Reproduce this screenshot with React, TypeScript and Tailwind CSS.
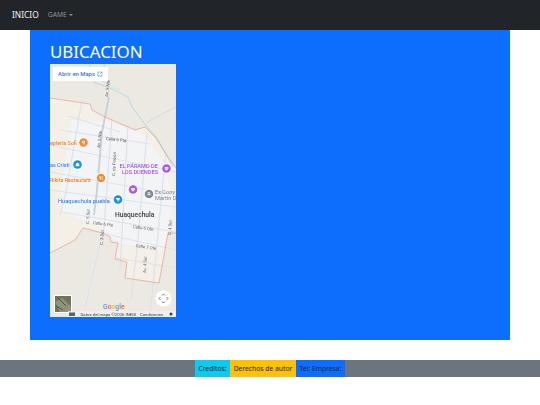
const sans = "font-['Noto_Sans','Open_Sans',sans-serif]";

function Pin({ x, y, fill, glyph }: { x: number; y: number; fill: string; glyph: string }) {
  return (
    <g>
      <path d={`M${x} ${y + 6.6}L${x - 3.7} ${y + 3}A5 5 0 1 1 ${x + 3.7} ${y + 3}Z`} fill="#fff" />
      <circle cx={x} cy={y} r="4.3" fill={fill} />
      <path d={glyph} transform={`translate(${x} ${y})`} fill="#fff" />
    </g>
  );
}

const food = "M-1.6 -1.8H-1V-.3H-.6V-1.8H0V2H-.6V.4H-1.6ZM.7 -1.8H1.5V2H.9V.4H.7Z";
const shop = "M-1.8 -.6L0 -2L1.8 -.6V1.8H-1.8Z";
const cart = "M-2 -1.5H2L1.4 .6H-1.2ZM-1 1.1H1.2V1.8H-1Z";
const theatre = "M-1.8 -1.6H1.8V.6L0 1.9L-1.8 .6ZM-1 -.7V-.1H-.2V-.7ZM.2 -.7V-.1H1V-.7Z";
const temple = "M-1.9 -.7L0 -2L1.9 -.7ZM-1.5 -.2H-.7V1.3H-1.5ZM-.4 -.2H.4V1.3H-.4ZM.7 -.2H1.5V1.3H.7Z";

function MapArt() {
  const streets = [
    "M82 100L66 192L60 215", "M112 118L106 200L103 240", "M128 125L120 270", "M147 132L138 240L131 300", "M166 150L150 317",
    "M68 116L120 132", "M60 130L150 144", "M50 145L176 172", "M50 172L176 195", "M50 190L176 207", "M62 212L176 232", "M88 230L176 250", "M116 258L176 268",
    "M102 235L83 317",
  ];
  return (
    <svg viewBox="50 64 126 253" className="block h-full w-full blur-[0.25px]" fontFamily="Roboto, 'Noto Sans', sans-serif">
      <rect x="50" y="64" width="126" height="253" fill="#ebe9e2" />
      <path d="M50 98L90 104L92 110L105 117L135 130L145 127L155 137L168 157L176 168L176 233L168 233L159 283L125 278L127 262L115 259L118 243L111 242L110 237L103 233L83 228L75 240L50 253Z" fill="#f5f0e7" />
      <path d="M72 120L110 122L145 135L165 165L172 200L168 232L162 250L118 243L100 226L62 212L60 190L66 160Z" fill="#f3f4f6" />
      {streets.map((d) => (
        <path key={d} d={d} stroke="#dde2e9" strokeWidth="1.2" fill="none" />
      ))}
      <path d="M109 97L102 132L97 190L94 215" stroke="#c8d0da" strokeWidth="1.9" fill="none" />
      <path d="M147 122L176 107" stroke="#d2d8da" strokeWidth="0.9" fill="none" />
      <path d="M90 64L91 70M104 64L105 70" stroke="#cfdbe2" strokeWidth="1.3" fill="none" />
      <path d="M93 82L110 88L128 97L132 107L147 127L157 138L173 167" stroke="#a8d4e2" strokeWidth="0.8" fill="none" />
      <path d="M100 80L120 90" stroke="#b9dde6" strokeWidth="0.6" fill="none" />
      <path d="M50 98L90 104L92 110L105 117L135 130L145 127L155 137L168 157L176 168" stroke="#e2a094" strokeWidth="0.7" fill="none" />
      <path d="M50 253L75 240L83 228L103 233L110 237L111 242L118 243L115 259L127 262L125 278L159 283L168 233L176 233" stroke="#e2a094" strokeWidth="0.7" fill="none" />

      <g fill="#5f6368" fontSize="4.3">
        <text transform="translate(108 97) rotate(-83)">Av. 5 Nte</text>
        <text transform="translate(100 148) rotate(-84)">Av. 5 Nte</text>
        <text transform="rotate(6 106 138)" x="106" y="140">Calle 6 Pte</text>
        <text transform="translate(115 176) rotate(-87)">C. de Pinzón</text>
        <text transform="rotate(8 93 222)" x="93" y="224">Calle 6 Pte</text>
        <text transform="rotate(8 133 226)" x="133" y="228">Calle 6 Ote</text>
        <text transform="rotate(8 136 244)" x="136" y="247">Calle 7 Ote</text>
        <text transform="translate(89 224) rotate(-87)">C. 5 Sur</text>
        <text transform="translate(103 245) rotate(-87)">C. 3 Sur</text>
        <text transform="translate(146 273) rotate(-87)">Av. 4 Sur</text>
        <text transform="translate(171 235) rotate(-87)">C. 4 Sur</text>
      </g>

      <g fontSize="5.4">
        <text x="50" y="145" fill="#e8710a">eplería Sofi</text>
        <text x="50" y="167" fill="#1a73e8">as Cristi</text>
        <text x="50" y="181.5" fill="#e8710a">Rikita Restaurant</text>
        <text x="119.5" y="168" fill="#9334e6" fontSize="5.6">EL PÁRAMO DE</text>
        <text x="122" y="174" fill="#9334e6" fontSize="5.6">LOS DUENDES</text>
        <text x="58" y="203" fill="#1a73e8" fontSize="5.7">Huaquechula puebla</text>
        <text x="155" y="194" fill="#80868b" fontSize="5.6">Ex Conv</text>
        <text x="155" y="199.5" fill="#80868b" fontSize="5.6">Martín D</text>
        <text x="115" y="217" fill="#3c4043" fontSize="6.7" fontWeight="500">Huaquechula</text>
      </g>

      <Pin x={83.5} y={142.5} fill="#ef8a36" glyph={food} />
      <Pin x={77.5} y={164.5} fill="#1a8fe3" glyph={shop} />
      <Pin x={101} y={178} fill="#ef8a36" glyph={food} />
      <Pin x={166.5} y={168.5} fill="#a45ee5" glyph={theatre} />
      <Pin x={133} y={189.5} fill="#a45ee5" glyph={theatre} />
      <Pin x={149} y={194} fill="#7b8a94" glyph={temple} />
      <Pin x={118} y={199.5} fill="#1a8fe3" glyph={cart} />

      <text x="103" y="309" fontSize="6.8" fontWeight="500" fill="#4285f4" opacity="0.85">G<tspan fill="#ea4335">o</tspan><tspan fill="#fbbc05">o</tspan><tspan fill="#4285f4">g</tspan><tspan fill="#34a853">l</tspan><tspan fill="#ea4335">e</tspan></text>

      <rect x="54" y="295" width="18" height="18" fill="#fff" />
      <rect x="55" y="296" width="16" height="16" fill="#6f7458" />
      <path d="M55 302L62 298L71 306L71 312L60 312Z" fill="#8f9478" />
      <path d="M58 298L66 306M56 306L63 310" stroke="#4c5340" strokeWidth="1" />

      <rect x="68" y="311" width="108" height="6" fill="#f1f1ee" fillOpacity="0.75" />
      <rect x="69" y="312.5" width="6" height="3.5" fill="#5f6368" />
      <text x="80.5" y="315.8" fontSize="4.3" fill="#3c4043">Datos del mapa ©2026 INEGI</text>
      <text x="140" y="315.8" fontSize="4.2" fill="#3c4043">Condiciones</text>
      <circle cx="171" cy="314" r="1.5" fill="#3c4043" />

      <circle cx="163.5" cy="298.5" r="8" fill="#fff" />
      <path d="M162 295.5L163.5 294L165 295.5M162 301.5L163.5 303L165 301.5M160.5 297L159 298.5L160.5 300M166.5 297L168 298.5L166.5 300" stroke="#666" strokeWidth="0.9" fill="none" />
    </svg>
  );
}

export default function App() {
  return (
    <div className={`min-h-[405px] bg-white ${sans}`}>
      <nav className="flex h-[30px] items-center bg-[#212529] pl-3">
        <span className="text-[8.4px] text-[#f4f4f4]">INICIO</span>
        <span className="ml-[9px] flex items-center text-[6.75px] text-[#8e9194]">
          GAME
          <span className="ml-[2px] h-0 w-0 border-x-[2px] border-t-[2px] border-x-transparent border-t-[#8e9194]" />
        </span>
      </nav>
      <main className="mx-[30px] h-[310px] bg-[#0d6efd] px-5 pt-[9px]">
        <h1 className="text-[16.9px] leading-[25px] text-white">UBICACION</h1>
        <div className="relative h-[253px] w-[126px] overflow-hidden">
          <MapArt />
          <div className="absolute left-[3px] top-[3px] flex h-[14px] w-[55px] items-center justify-center gap-[2px] bg-white font-['Roboto',sans-serif] text-[5.9px] font-medium text-[#3b78e7]">
            Abrir en Maps
            <svg width="6" height="6" viewBox="0 0 12 12" fill="none" stroke="#3b78e7" strokeWidth="1.2">
              <path d="M5 2H2V10H10V7M7 2H10V5M10 2L5.5 6.5" />
            </svg>
          </div>
        </div>
      </main>
      <footer className="mt-5 flex h-[17px] justify-center bg-[#6c757d] text-[6.75px] leading-[17px] text-[#212529]">
        <div className="w-[35px] bg-[#0dcaf0] text-center">Creditos:</div>
        <div className="w-[66px] bg-[#ffc107] text-center">Derechos de autor</div>
        <div className="w-[49px] bg-[#0d6efd] text-center">Tel: Empresa:</div>
      </footer>
    </div>
  );
}
